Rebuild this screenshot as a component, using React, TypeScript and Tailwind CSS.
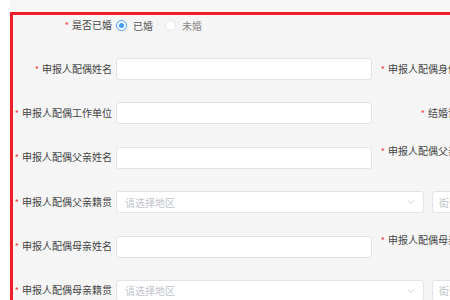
import { ChevronDown } from "lucide-react";

const font = "font-['Noto_Sans_CJK_SC','Noto_Sans',sans-serif]";

function Star() {
  return <span className="mr-[3px] text-[9px] text-[#ee3b3b]">*</span>;
}

function Label({ text }: { text: string }) {
  return (
    <div className="w-[99px] shrink-0 whitespace-nowrap text-right text-[10px] leading-[14px] text-[#444]">
      <Star />
      {text}
    </div>
  );
}

function SideLabel({ text }: { text: string }) {
  return (
    <div className="ml-[6px] w-[100px] shrink-0 text-right text-[10px] leading-[12px] text-[#444]">
      <Star />
      {text}
    </div>
  );
}

function TextInput({ width = "w-[256px]" }: { width?: string }) {
  return (
    <div className={`${width} h-[22px] shrink-0 rounded-[3px] border border-[#e1e3e8] bg-white`} />
  );
}

function RegionSelect() {
  return (
    <>
      <div className="flex h-[22px] w-[308px] shrink-0 items-center justify-between rounded-[3px] border border-[#e1e3e8] bg-white pl-[8px] pr-[6px]">
        <span className="text-[10px] text-[#c0c4cc]">请选择地区</span>
        <ChevronDown className="h-[12px] w-[12px] text-[#c0c4cc]" strokeWidth={1.5} />
      </div>
      <div className="ml-[8px] flex h-[22px] w-[120px] shrink-0 items-center rounded-[3px] border border-[#e1e3e8] bg-white pl-[6px]">
        <span className="whitespace-nowrap text-[10px] text-[#c0c4cc]">街道/乡镇</span>
      </div>
    </>
  );
}

function Radio({ checked, label }: { checked?: boolean; label: string }) {
  return (
    <div className="flex items-center">
      {checked ? (
        <span className="flex h-[11px] w-[11px] items-center justify-center rounded-full border border-[#409eff] bg-white">
          <span className="h-[5px] w-[5px] rounded-full bg-[#409eff]" />
        </span>
      ) : (
        <span className="h-[11px] w-[11px] rounded-full border border-[#e4e6eb] bg-white" />
      )}
      <span className={`ml-[6px] text-[10px] ${checked ? "text-[#555]" : "text-[#888]"}`}>{label}</span>
    </div>
  );
}

export default function App() {
  return (
    <div className={`h-[300px] w-[450px] overflow-hidden bg-white pl-[10px] ${font}`}>
      <div className="h-full bg-[#f6f6f6] pt-[12px]">
        <div className="h-[400px] w-[700px] border-[3px] border-[#ef1d27] bg-[#f5f5f5]">
          <div className="flex h-[20px] items-center">
            <Label text="是否已婚" />
            <div className="ml-[4px] flex items-center gap-[12px]">
              <Radio checked label="已婚" />
              <Radio label="未婚" />
            </div>
          </div>

          <div className="mt-[23px] flex flex-col gap-[22.4px]">
            <div className="flex h-[22px] items-center">
              <Label text="申报人配偶姓名" />
              <div className="ml-[4px] flex items-center">
                <TextInput />
                <SideLabel text="申报人配偶身份证号" />
              </div>
            </div>
            <div className="flex h-[22px] items-center">
              <Label text="申报人配偶工作单位" />
              <div className="ml-[4px] flex items-center">
                <TextInput />
                <SideLabel text="结婚证编号" />
              </div>
            </div>
            <div className="flex h-[22px] items-center">
              <Label text="申报人配偶父亲姓名" />
              <div className="ml-[4px] flex items-center">
                <TextInput />
                <SideLabel text="申报人配偶父亲身份证号" />
              </div>
            </div>
            <div className="flex h-[22px] items-center">
              <Label text="申报人配偶父亲籍贯" />
              <div className="ml-[4px] flex items-center">
                <RegionSelect />
              </div>
            </div>
            <div className="flex h-[22px] items-center">
              <Label text="申报人配偶母亲姓名" />
              <div className="ml-[4px] flex items-center">
                <TextInput />
                <SideLabel text="申报人配偶母亲身份证号" />
              </div>
            </div>
            <div className="flex h-[22px] items-center">
              <Label text="申报人配偶母亲籍贯" />
              <div className="ml-[4px] flex items-center">
                <RegionSelect />
              </div>
            </div>
          </div>
        </div>
      </div>
    </div>
  );
}
